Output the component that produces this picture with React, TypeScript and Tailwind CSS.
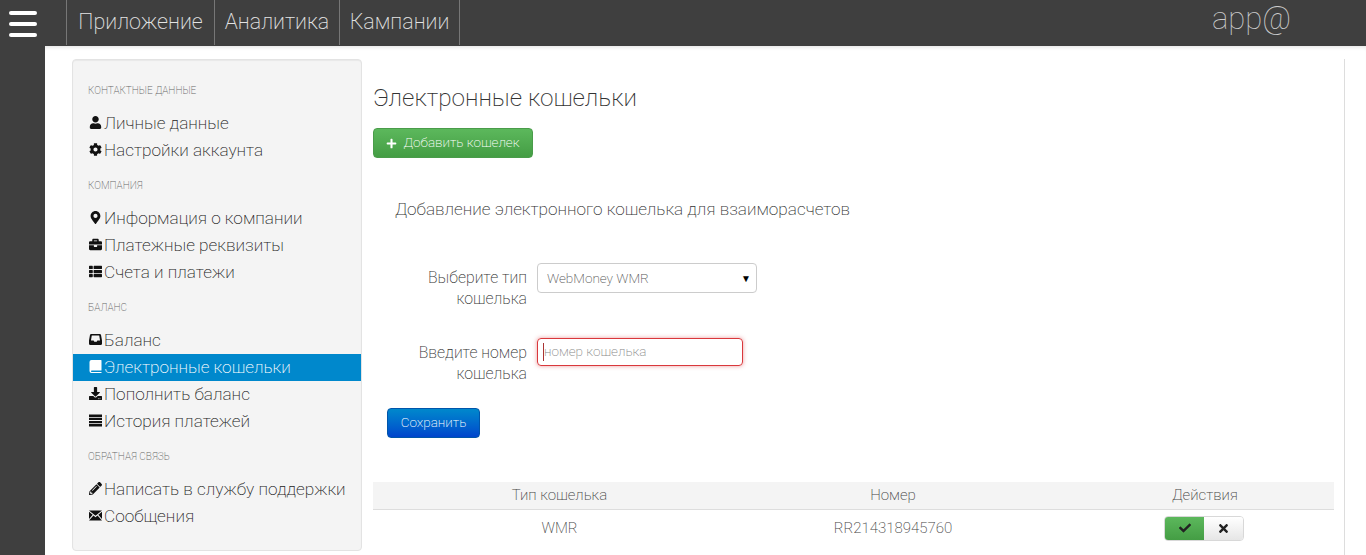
import React from "react";
import { FaUser, FaCog, FaMapMarkerAlt, FaBriefcase, FaThList, FaDownload, FaPencilAlt, FaPlus, FaCheck, FaTimes } from "react-icons/fa";

// glyphicon-like shapes the icon packs don't have
const InboxIcon = ({ className }: { className?: string }) => (
  <svg viewBox="0 0 14 12" className={className} fill="currentColor">
    <path d="M2.5 0h9a1.5 1.5 0 0 1 1.4 1L14 7v3.5A1.5 1.5 0 0 1 12.500 12h-11A1.500 1.500 0 0 1 0 10.500V7l1.100-6A1.500 1.500 0 0 1 2.500 0zM3 1.800 2.100 7H5l.7 1.500h2.600L9 7h2.900L11 1.800z" fillRule="evenodd" />
  </svg>
);
const BookIcon = ({ className }: { className?: string }) => (
  <svg viewBox="0 0 12 13" className={className} fill="currentColor">
    <path d="M2 0h9.500a.5.500 0 0 1 .5.500V10a.5.500 0 0 1-.5.500H2.300c-.5 0-.9.300-.9.700s.4.700.9.700H12V13H2a2 2 0 0 1-2-2V2a2 2 0 0 1 2-2z" />
  </svg>
);
const RowsIcon = ({ className }: { className?: string }) => (
  <svg viewBox="0 0 13 12" className={className} fill="currentColor">
    <path d="M0 0h13v2.400H0zM0 3.200h13v2.400H0zM0 6.400h13v2.400H0zM0 9.600h13V12H0z" />
  </svg>
);
const MailIcon = ({ className }: { className?: string }) => (
  <svg viewBox="0 0 14 11" className={className} fill="currentColor">
    <path d="M0 0h14L7 5.800zM0 1.500V9.300l4-4.500zM14 1.500V9.300l-4-4.500zM4.800 5.500 7 7.300l2.200-1.800L14 11H0z" />
  </svg>
);

const sections = [
  {
    title: "КОНТАКТНЫЕ ДАННЫЕ",
    items: [
      { icon: FaUser, label: "Личные данные" },
      { icon: FaCog, label: "Настройки аккаунта" },
    ],
  },
  {
    title: "КОМПАНИЯ",
    items: [
      { icon: FaMapMarkerAlt, label: "Информация о компании" },
      { icon: FaBriefcase, label: "Платежные реквизиты" },
      { icon: FaThList, label: "Счета и платежи" },
    ],
  },
  {
    title: "БАЛАНС",
    items: [
      { icon: InboxIcon, label: "Баланс" },
      { icon: BookIcon, label: "Электронные кошельки", active: true },
      { icon: FaDownload, label: "Пополнить баланс" },
      { icon: RowsIcon, label: "История платежей" },
    ],
  },
  {
    title: "ОБРАТНАЯ СВЯЗЬ",
    items: [
      { icon: FaPencilAlt, label: "Написать в службу поддержки" },
      { icon: MailIcon, label: "Сообщения" },
    ],
  },
];

const Sidebar = () => (
  <aside className="w-[290px] h-[492px] shrink-0 bg-[#f4f4f4] border border-[#e3e3e3] rounded-[4px] pt-[24px] shadow-[inset_0_1px_1px_rgba(0,0,0,0.05)]">
    {sections.map((s) => (
      <div key={s.title} className="mb-[15px]">
        <div className="pl-[15px] h-[14px] leading-[14px] text-[10px] font-extralight text-[#666] mb-[12px]">{s.title}</div>
        {s.items.map((item: any) => (
          <div
            key={item.label}
            className={`h-[27px] pl-[16px] flex items-center gap-[3px] text-[17.200px] font-extralight ${item.active ? "bg-[#0088cc] text-white" : "text-[#222]"}`}
          >
            <span className={`w-[12px] flex justify-center -mt-[3px] ${item.active ? "text-white" : "text-[#111]"}`}>
              <item.icon className="w-[13px] h-[13px] shrink-0" />
            </span>
            <span>{item.label}</span>
          </div>
        ))}
      </div>
    ))}
  </aside>
);

export default function App() {
  return (
    <div className="w-[1366px] h-[555px] overflow-hidden bg-[#3f3f3f] flex flex-col font-['Roboto','Liberation_Sans',sans-serif]">
      <header className="h-[46px] shrink-0 flex items-stretch relative">
        <div className="w-[66px] flex flex-col gap-[7px] pl-[9px] pt-[11px]">
          <span className="w-[28px] h-[4px] rounded-full bg-white" />
          <span className="w-[28px] h-[4px] rounded-full bg-white" />
          <span className="w-[28px] h-[4px] rounded-full bg-white" />
        </div>
        <nav className="flex border-l border-[#777] text-[21.500px] font-extralight text-[#e4e4e4] h-[45px]">
          <a className="w-[148px] border-r border-[#777] flex items-center justify-center">Приложение</a>
          <a className="w-[125px] border-r border-[#777] flex items-center justify-center">Аналитика</a>
          <a className="w-[120px] border-r border-[#777] flex items-center justify-center">Кампании</a>
        </nav>
        <div className="ml-auto mr-[75px] pt-[1px] text-[31px] leading-[36px] font-thin text-[#ccc]">app@</div>
      </header>

      <div className="flex-1 flex min-h-0 pl-[45px]">
        <main className="flex-1 bg-white flex pl-[27px] pr-[21px] pt-[13px] shadow-[inset_0_4px_4px_-3px_rgba(0,0,0,0.12)]">
          <Sidebar />
          <section className="flex-1 border-r border-[#ddd] pl-[11px] pr-[10px] flex flex-col">
            <h1 className="mt-[25px] text-[24.300px] leading-[28px] font-extralight text-[#333]">Электронные кошельки</h1>
            <button className="mt-[16px] self-start w-[160px] h-[30px] rounded-[4px] border border-[#4a9c4a] bg-gradient-to-b from-[#5cb85c] to-[#449d44] text-white text-[13.500px] font-extralight flex items-center justify-center gap-[6px] pb-[2px]">
              <FaPlus className="text-[11px] mt-[2px]" /> Добавить кошелек
            </button>
            <h2 className="mt-[40px] ml-[22px] text-[17.150px] leading-[22px] font-extralight text-[#333]">Добавление электронного кошелька для взаиморасчетов</h2>

            <div className="mt-[43px] flex items-start">
              <label className="w-[154px] text-right text-[15.800px] leading-[21px] font-extralight text-[#333] pt-[4px]">Выберите тип кошелька</label>
              <div className="ml-[10px] w-[220px] h-[30px] rounded-[4px] border border-[#ccc] flex items-center justify-between pl-[9px] pr-[5px] text-[13.500px] font-extralight text-[#555]">
                WebMoney WMR
                <span className="text-[10px] text-black">▼</span>
              </div>
            </div>

            <div className="mt-[29px] flex items-start">
              <label className="w-[154px] text-right text-[15.800px] leading-[21px] font-extralight text-[#333] pt-[4px]">Введите номер кошелька</label>
              <div className="ml-[10px] w-[206px] h-[28px] rounded-[4px] border border-[#d9383c] shadow-[0_0_4px_rgba(217,56,60,0.5)] flex items-center pl-[5px] pb-[1px] text-[13.500px] font-extralight text-[#888]">
                <span className="w-px h-[18px] bg-[#a33]" />
                номер кошелька
              </div>
            </div>

            <button className="mt-[24px] ml-[14px] self-start w-[93px] h-[30px] rounded-[4px] bg-gradient-to-b from-[#0088cc] to-[#0044cc] border border-[#0055aa] text-white text-[13.500px] font-extralight pb-[2px]">Сохранить</button>

            <div className="mt-[44px] h-[28px] bg-[#f4f4f4] border-b border-[#ddd] grid grid-cols-[373px_294px_1fr] items-center text-center text-[15px] font-extralight text-[#444]">
              <span>Тип кошелька</span>
              <span>Номер</span>
              <span className="pl-[36px]">Действия</span>
            </div>
            <div className="h-[36px] grid grid-cols-[373px_294px_1fr] items-center text-center text-[15px] font-extralight text-[#444]">
              <span>WMR</span>
              <span>RR214318945760</span>
              <span className="flex justify-center pl-[34px]">
                <span className="flex h-[25px] rounded-[4px] overflow-hidden border border-[#d8d8d8]">
                  <span className="w-[39px] bg-gradient-to-b from-[#5cb85c] to-[#449d44] flex items-center justify-center text-[#222]">
                    <FaCheck className="text-[12px]" />
                  </span>
                  <span className="w-[39px] bg-gradient-to-b from-white to-[#e6e6e6] flex items-center justify-center text-[#222]">
                    <FaTimes className="text-[13px]" />
                  </span>
                </span>
              </span>
            </div>
          </section>
        </main>
      </div>
    </div>
  );
}
